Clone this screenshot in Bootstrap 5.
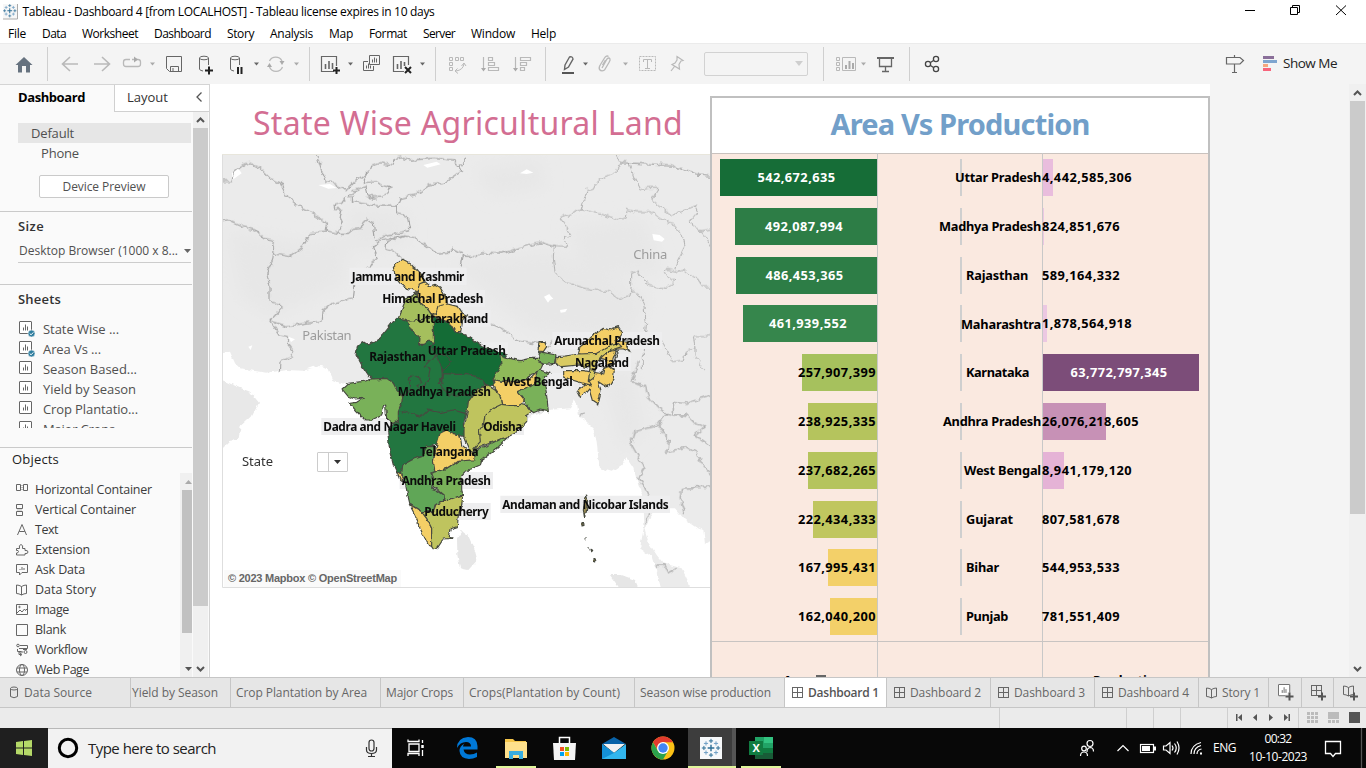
<!DOCTYPE html>
<html lang="en">
<head>
<meta charset="utf-8">
<title>Tableau - Dashboard 4</title>
<link href="https://cdn.jsdelivr.net/npm/bootstrap@5.3.0/dist/css/bootstrap.min.css" rel="stylesheet">
<style>
body{width:1366px;height:768px;overflow:hidden;font:12px/20px "Open Sans","Noto Sans",sans-serif;color:#505050;background:#fff}
svg{display:block;flex:none}
.fit{white-space:nowrap;display:inline-block}
.win{color:#000;font-family:"Open Sans",sans-serif}
.titlebar{height:24px}.menubar{height:19px}
.toolbar{height:41px;background:#f4f4f4;border-top:1px solid #ebebeb}
.toolbar svg{margin-top:-1px}
.lt{stroke:#b9b9b9;fill:none}.dk{stroke:#666;fill:none}
.cl{fill:#aaa;stroke:none}.cd{fill:#666;stroke:none}.sep{stroke:#cfcfcf;fill:none}
.combo{width:104px;height:24px;border:1px solid #d2d2d2;border-radius:2px;margin-top:8px}
.workspace{height:593px}
.side{width:210px;background:#fafafa;border-right:1px solid #d4d4d4;border-top:1px solid #d4d4d4}
.sidehead{height:27px}
.tab-off{background:#fff;width:95px;border-left:1px solid #d0d0d0;border-bottom:1px solid #d0d0d0;padding-left:12px;color:#333;font-size:13px;line-height:25px}
.pane{width:192px}
.h{font-weight:600;font-size:13px;color:#333}
.rule{border-top:1px solid #cacaca}
.sel{background:#e6e6e6;height:20px;margin:11px 0 0 18px;padding-left:13px;width:173px}
.device{width:130px;height:23px;border:1px solid #cacaca;border-radius:2px;margin:11px 0 0 39px;line-height:20px;padding:0;font-size:12px;background:#fff;color:#505050}
.size-box{margin:5px 1px 0 18px;height:22px;border-bottom:1px solid #ccc}
.rowi{height:20px;font-size:13px;gap:8px;padding-left:19px}
.rowo{height:20px;font-size:12.5px;gap:6px;padding-left:16px;color:#3c3c3c}
.canvas-bg{background:#f4f4f4}
.board{width:1000px;background:#fff}
.viz{font-family:"Noto Sans",sans-serif}
.map-title{color:#d36e92;font-size:32px;line-height:40px;height:70px;padding:19px 0 0 43px}
.filter{left:32px;top:367px;font-size:13px;color:#333}
.dd{width:31px;height:20px;border:1px solid #ccc;background:#fff;margin-left:44px;margin-top:1px;border-radius:1px}
.credit{left:14px;top:486px;height:17px;line-height:17px;background:#fafafa;color:#666;font-family:"Liberation Sans",sans-serif;font-size:11px;font-weight:700;padding:0 4px}
.panel{width:500px;margin-top:12px;border:2px solid #c0c0c0;border-bottom:0;background:#fae9e0;color:#000;font-weight:700;font-size:12.8px}
.panel-title{height:56px;background:#fff;color:#729fc9;font-size:29px;font-weight:700;line-height:51px;border-bottom:1px solid #c9c2be;text-align:center}
.bars{height:488.900px;margin-top:-.900px;border-bottom:1px solid #c8c4c2}
.rowb{height:48.8px}
.c1{width:166px;border-right:1px solid #c8c8c8}.c2{width:165px;border-right:1px solid #c8c8c8}.c3{width:165px}
.bar-v{height:37px}
.tick{width:2px;height:37px;background:#cfcfcf;margin-left:82px}
.over{position:absolute;top:0;line-height:37.500px;white-space:nowrap}
.axis-a{padding:28px 0 0 22px}.axis-p{padding:28px 0 0 50px}
.tabs{height:31px;background:#e6e6e6;border-top:1px solid #c6c6c6;border-bottom:1px solid #c6c6c6;color:#666;font-size:12px}
.tabs>div{border-right:1px solid #c6c6c6;height:29px;line-height:29px;flex:none;display:flex;align-items:center;padding-left:6px}
.tabs>.on{background:#fff;font-weight:600;color:#555;line-height:26px}
.status{height:20px;background:#ebebeb}
.task{height:40px;background:#080808;color:#fff}
.search{width:344px;background:#f2f2f2;border-top:1px solid #b8b8b8;color:#222;font-size:15px;line-height:39px}
.clock{width:62px;text-align:center;font-size:12px;line-height:18px;padding-top:2px;margin-left:11px}
</style>
</head>
<body class="d-flex flex-column">
<svg width="0" height="0" class="position-absolute">
<defs>
<symbol id="sheet" viewBox="0 0 16 16"><rect x=".5" y=".5" width="12" height="12" rx=".5" fill="#fff" stroke="#666"/><path d="M4.500 9.500v-3M6.500 9.500v-6M8.500 9.500v-4" stroke="#666"/></symbol>
<symbol id="chk" viewBox="0 0 16 16"><use href="#sheet"/><circle cx="12.500" cy="12.500" r="3.500" fill="#2e7d9e" stroke="#fafafa" stroke-width=".6"/><path d="M10.700 12.500l1.400 1.300 2.200-2.400" stroke="#fff" fill="none"/></symbol>
<symbol id="dash" viewBox="0 0 12 12"><rect x=".5" y=".5" width="10" height="10" fill="none" stroke="#666"/><path d="M5.500 0v11M0 5.500h11" stroke="#666"/></symbol>
<symbol id="book" viewBox="0 0 12 12"><path d="M5.500 2.500Q3 1 .5 1v8.500q2.500 0 5 1.500 2.500-1.500 5-1.500V1Q8 1 5.500 2.500V11" fill="none" stroke="#666"/></symbol>
<symbol id="tab" viewBox="-12 -12 24 24"><g stroke="#2c6e96" stroke-width="1.700"><path d="M0-4V4M-4 0H4"/><path d="M0-11v5M-2.500-8.500h5M0 6v5M-2.500 8.500h5M-11 0h5M-8.500-2.500v5M6 0h5M8.500-2.500v5" stroke-width="1.200"/><path d="M-6-8v5M-8.500-5.500h5M6-8v5M3.500-5.500h5M-6 3v5M-8.500 5.500h5M6 3v5M3.500 5.500h5" stroke="#6d9ec4" stroke-width="1.200"/></g></symbol>
</defs></svg>

<header class="titlebar win d-flex align-items-center flex-shrink-0">
<svg width="22.500" height="24" viewBox="0 0 22.500 24"><rect x="3" y="4" width="15" height="15" fill="#f7f7f7"/><path d="M17.500 4v15H3" stroke="#aaa" fill="none"/><use href="#tab" x="2.500" y="3.500" width="14.500" height="14.500"/></svg>
<span class="fit" data-w="412">Tableau - Dashboard 4 [from LOCALHOST] - Tableau license expires in 10 days</span>
<svg class="ms-auto" width="136" height="24" viewBox="1230 0 136 24" fill="none" stroke="#000"><path d="M1245 10.500h10M1290.500 7.500h7v7h-7zM1292.500 7.500v-2h7v7h-2M1336 5.500l10 9.500M1346 5.500l-10 9.500"/></svg>
</header>
<nav class="menubar win d-flex flex-shrink-0 ps-2" style="line-height:20px">
<span style="width:34px"><span class="fit" data-w="18">File</span></span><span style="width:40px"><span class="fit" data-w="24">Data</span></span><span style="width:72px"><span class="fit" data-w="56">Worksheet</span></span><span style="width:73px"><span class="fit" data-w="57">Dashboard</span></span><span style="width:43px"><span class="fit" data-w="27">Story</span></span><span style="width:59px"><span class="fit" data-w="43">Analysis</span></span><span style="width:40px"><span class="fit" data-w="24">Map</span></span><span style="width:54px"><span class="fit" data-w="38">Format</span></span><span style="width:48px"><span class="fit" data-w="32">Server</span></span><span style="width:60px"><span class="fit" data-w="44">Window</span></span><span class="fit" data-w="25">Help</span>
</nav>

<div class="toolbar d-flex flex-shrink-0">
<svg width="48" height="41" viewBox="0 43 48 41"><path d="M15.500 65L24 57l8.500 8h-2.500v7.500h-4V66h-4v6.500h-4V65z" fill="#66727f"/><path class="sep" d="M47.500 47v34"/></svg>
<svg width="68" height="41" viewBox="48 43 68 41"><path class="lt" stroke-width="1.600" d="M78 64H63M70 57l-7.500 7 7.500 7M94 64h15M102 57l7.500 7-7.500 7"/></svg>
<svg width="44" height="41" viewBox="116 43 44 41"><path class="lt" stroke-width="1.300" d="M130 59.500h-4q-2.500 0-2.500 2.500v2q0 2.500 2.500 2.500h12q2.500 0 2.500-2.500v-2q0-2.500-2.500-2.500h-6"/><path class="cl" d="M134 56.500v6l4-3zM150 62.500h5l-2.500 3z"/></svg>
<svg width="30" height="41" viewBox="160 43 30 41"><path class="dk" d="M166.500 56.500h15v15h-12l-3-3zM170.500 71v-4.500h8V71M173 68v3"/></svg>
<svg width="32" height="41" viewBox="190 43 32 41"><g class="dk"><ellipse cx="204" cy="58" rx="4.500" ry="1.800"/><path d="M199.500 58v11q0 1.500 3.500 2M208.500 58v7"/><path stroke="#222" stroke-width="2" d="M205 70.500h8M209 66.500v8"/></g></svg>
<svg width="42" height="41" viewBox="222 43 42 41"><g class="dk"><ellipse cx="235" cy="58" rx="4.500" ry="1.800"/><path d="M230.500 58v11q0 1.500 3.500 2M239.500 58v7"/><path stroke="#222" stroke-width="2" d="M238 67v7M241.500 67v7"/></g><path class="cd" d="M254 62.500h5l-2.500 3z"/></svg>
<svg width="46" height="41" viewBox="264 43 46 41"><path class="lt" stroke-width="1.300" d="M269.500 61a7 7 0 0 1 12.500 0M282.500 67a7 7 0 0 1-13 0"/><path class="cl" d="M279.500 61h5l-2.500 4zM267 67h5l-2.500-4zM294 62.500h5l-2.500 3z"/><path class="sep" d="M309.500 47v34"/></svg>
<svg width="48" height="41" viewBox="310 43 48 41"><path class="dk" stroke-width="1.200" d="M334 71.500h-12.500v-15h15V66"/><path class="dk" stroke-width="1.600" d="M325.500 69v-5M329 69v-8M332.500 69v-6"/><path stroke="#222" stroke-width="2" d="M333 70.500h7M336.500 67v7"/><path class="cd" d="M348 62.500h5l-2.500 3z"/></svg>
<svg width="28" height="41" viewBox="358 43 28 41"><path class="dk" d="M369.500 55.500h10v9h-10zM368 61.500h-4.500v9h10V66M372.500 62.500v-3M374.500 62.500v-5M376.500 62.500v-4M366.500 68.500v-3M368.500 68.500v-5M370.500 68.500v-3"/></svg>
<svg width="50" height="41" viewBox="386 43 50 41"><path class="dk" stroke-width="1.200" d="M404 71.500h-10.500v-15h15V65"/><path class="dk" stroke-width="1.600" d="M397.500 69v-5M401 69v-8M404.500 66v-4"/><path stroke="#222" stroke-width="2" d="M405 67l6 6M411 67l-6 6"/><path class="cd" d="M420 62.500h5l-2.500 3z"/><path class="sep" d="M435.500 47v34"/></svg>
<svg width="38" height="41" viewBox="436 43 38 41"><path class="lt" d="M449.500 57.500h3v3h-3zM455.500 57.500h3v3h-3zM460.500 57.500h3v3h-3zM449.500 62.500h3v3h-3zM449.500 67.500h3v3h-3zM464 64q-1 6-8 7M461.500 66l2.500-3 2 3M457.500 68.500L455 71l3 2.500"/></svg>
<svg width="72" height="41" viewBox="474 43 72 41"><path class="lt" stroke-width="1.200" d="M483.500 57v13M488.500 57.500h4v3h-4zM488.500 62.500h6v3h-6zM488.500 67.500h10v3h-10zM515.500 57v13M520.500 57.500h10v3h-10zM520.500 62.500h6v3h-6zM520.500 67.500h4v3h-4z"/><path class="cl" d="M481 68h5l-2.500 3.500zM513 68h5l-2.500 3.500z"/><path class="sep" d="M545.500 47v34"/></svg>
<svg width="44" height="41" viewBox="546 43 44 41"><path class="dk" stroke-width="1.400" d="M565 65l4.500-8q3-1 3.500 2l-4.500 8-4 2.500z"/><path d="M562 73h12" stroke="#555" stroke-width="2"/><path class="cd" d="M583 62.500h5l-2.500 3z"/></svg>
<svg width="42" height="41" viewBox="590 43 42 41"><path class="lt" stroke-width="1.300" d="M602 68l5-9q2-2 3 0 .5 1-1 3.500l-4.500 7.500q-3 2-5-.5-1-2 1-5l4-6.500q2-3 4-1.500M602.500 65l3-5"/><path class="cl" d="M623 62.500h5l-2.500 3z"/></svg>
<svg width="36" height="41" viewBox="632 43 36 41"><rect class="lt" x="639.500" y="56.500" width="16" height="14" stroke-dasharray="2 1"/><path class="lt" d="M643.500 62v-2.500h8V62M647.500 60v8M645 68.500h5"/></svg>
<svg width="36" height="41" viewBox="668 43 36 41"><path class="lt" stroke-width="1.200" d="M677 56.500l6 4-2 .5-2 3.500.5 4.500-7.500-4.500 3-1.500 2-3zM674.500 66.500L671 71"/></svg>
<div class="combo"><svg width="102" height="22"><path d="M90 9h8l-4 5z" fill="#cecece"/></svg></div>
<svg width="102" height="41" viewBox="808 43 102 41"><path class="sep" d="M823.500 47v34M909.500 47v34"/><path class="lt" d="M836.500 57.500h3v3h-3zM836.500 62.500h3v3h-3zM836.500 67.500h3v3h-3zM842.500 57.500h13v13h-13z"/><path stroke="#aaa" stroke-width="2" d="M846 69v-4M849.500 69v-8M853 69v-6"/><path class="cl" d="M861 62.500h5l-2.500 3z"/><path class="dk" stroke-width="1.300" d="M879.500 59v7.500h12V59M885.500 66v5M882 71.500h7"/><path stroke="#666" stroke-width="2" d="M877 58h17"/></svg>
<svg width="40" height="41" viewBox="910 43 40 41"><g fill="none" stroke="#444" stroke-width="1.300"><circle cx="928" cy="64" r="2.600"/><circle cx="936" cy="59" r="2.600"/><circle cx="936" cy="69" r="2.600"/><path d="M930.500 62.500l3-2M930.500 65.500l3 2"/></g></svg>
<svg class="ms-auto" width="66" height="41" viewBox="1217 43 66 41"><path class="dk" stroke-width="1.200" d="M1226.500 57.500h13.500l3.500 3-3.500 3.500h-13.500zM1234.500 55v2M1234.500 64v8M1232 72.500h5"/><path fill="#8a6f99" d="M1263 56h11v3h-11z"/><path fill="#7fa5cf" d="M1263 60h14v3h-14z"/><path fill="#f5a77f" d="M1263 64h5v3h-5z"/><path fill="#f8657c" d="M1263 68h8v3h-8z"/></svg>
<span class="fit" data-w="54" style="font-size:13.500px;line-height:39px;color:#222;margin-right:29px">Show Me</span>
</div>

<main class="workspace d-flex flex-shrink-0">
<aside class="side d-flex flex-column flex-shrink-0 overflow-hidden">
 <div class="sidehead d-flex justify-content-between flex-shrink-0"><span class="fit" data-w="67" style="font-size:13px;font-weight:700;color:#000;margin-left:18px;line-height:25px">Dashboard</span>
 <div class="tab-off d-flex"><span class="fit" data-w="41">Layout</span><svg class="ms-auto" width="16" height="26"><path d="M8.500 7.500L4 12l4.500 4.500" fill="none" stroke="#555" stroke-width="1.300"/></svg></div></div>
 <div class="d-flex" style="height:565px">
 <div class="pane overflow-hidden">
  <div class="sel d-block"><span class="fit" data-w="43" style="font-size:13px">Default</span></div>
  <div style="padding-left:41px"><span class="fit" data-w="38" style="font-size:13px">Phone</span></div>
  <button class="device btn d-block"><span class="fit" data-w="83">Device Preview</span></button>
  <div class="rule" style="margin-top:13px"></div>
  <div class="h" style="padding:4px 0 0 18px"><span class="fit" data-w="26">Size</span></div>
  <div class="size-box d-flex"><span class="fit" data-w="159" style="margin-left:1px;margin-right:5px">Desktop Browser (1000 x 8...</span><svg width="9" height="20"><path d="M1 8h7l-3.500 4z" fill="#666"/></svg></div>
  <div class="rule" style="margin-top:21px"></div>
  <div class="h" style="padding:4px 0 0 18px"><span class="fit" data-w="43">Sheets</span></div>
  <div class="overflow-hidden" style="height:119px;padding-top:10px">
   <div class="rowi d-flex"><svg width="16" height="18"><use href="#chk" y="2" width="16" height="16"/></svg><span class="fit" data-w="76">State Wise ...</span></div>
   <div class="rowi d-flex"><svg width="16" height="18"><use href="#chk" y="2" width="16" height="16"/></svg><span class="fit" data-w="58">Area Vs ...</span></div>
   <div class="rowi d-flex"><svg width="16" height="18"><use href="#sheet" y="2" width="16" height="16"/></svg><span class="fit" data-w="94">Season Based...</span></div>
   <div class="rowi d-flex"><svg width="16" height="18"><use href="#sheet" y="2" width="16" height="16"/></svg><span class="fit" data-w="93">Yield by Season</span></div>
   <div class="rowi d-flex"><svg width="16" height="18"><use href="#sheet" y="2" width="16" height="16"/></svg><span class="fit" data-w="95">Crop Plantatio...</span></div>
   <div class="rowi d-flex"><svg width="16" height="18"><use href="#sheet" y="2" width="16" height="16"/></svg><span class="fit" data-w="72">Major Crops</span></div>
  </div>
  <div class="rule" style="margin-top:19px"></div>
  <div class="d-flex justify-content-between" style="height:230px">
   <div><div style="font-size:13px;color:#222;padding:1px 0 0 12px"><span class="fit" data-w="47">Objects</span></div>
   <div style="padding-top:11px">
    <div class="rowo d-flex"><svg width="13" height="18" fill="none" stroke="#666"><path d="M.5 4.500h4v6h-4zM7.500 4.500h4v6h-4z"/><path stroke="#bbb" d="M5 5.500h2M5 7.500h2M5 9.500h2"/></svg><span class="fit" data-w="117">Horizontal Container</span></div>
    <div class="rowo d-flex"><svg width="13" height="18" fill="none" stroke="#666"><path d="M.5 4.500h6v4h-6zM.5 11.500h6v4h-6z"/><path stroke="#bbb" d="M1 10h5"/></svg><span class="fit" data-w="101">Vertical Container</span></div>
    <div class="rowo d-flex"><svg width="13" height="18" fill="none" stroke="#666"><path d="M1.500 15L6 4.500 10.500 15M3.200 11.500h5.600"/></svg><span class="fit" data-w="23">Text</span></div>
    <div class="rowo d-flex"><svg width="13" height="18" fill="none" stroke="#666"><path d="M.5 8.500h3q-1-3.500 1.500-4 2.500.5 1.500 4h2.500v2q3-.5 3 1.500t-3 1.500v1.500H.5v-2q2 0 2-1.500t-2-1z"/></svg><span class="fit" data-w="55">Extension</span></div>
    <div class="rowo d-flex"><svg width="13" height="18" fill="none" stroke="#666"><path d="M.5 4.500h11v8H6l-2.500 2.500v-2.500h-3zM4 10V9M6 10V7M8 10V8"/></svg><span class="fit" data-w="50">Ask Data</span></div>
    <div class="rowo d-flex"><svg width="13" height="18"><use href="#book" y="4" width="12" height="12"/></svg><span class="fit" data-w="61">Data Story</span></div>
    <div class="rowo d-flex"><svg width="13" height="18" fill="none" stroke="#666"><path d="M.5 4.500h11v10H.5zM1 13l3-3 2 2 2.500-3 1 1.500 2-2"/><circle cx="3.500" cy="7" r=".7"/></svg><span class="fit" data-w="34">Image</span></div>
    <div class="rowo d-flex"><svg width="13" height="18" fill="none" stroke="#666"><path d="M.5 4.500h11v11H.5z"/></svg><span class="fit" data-w="31">Blank</span></div>
    <div class="rowo d-flex"><svg width="13" height="18" fill="none" stroke="#666"><circle cx="2" cy="5.500" r="1.300"/><path d="M4 5.500h7.500v3H3M1.500 9v2.500h4M7 9.500h4"/><circle cx="9.500" cy="12" r="1.500"/><path d="M7 12H3v2.500h2M4 13l2 1.500-2 1.500"/></svg><span class="fit" data-w="52">Workflow</span></div>
    <div class="rowo d-flex"><svg width="13" height="18" fill="none" stroke="#666"><circle cx="6" cy="10" r="5.500"/><ellipse cx="6" cy="10" rx="2.500" ry="5.500"/><path d="M1 8h10M1 12h10"/></svg><span class="fit" data-w="54">Web Page</span></div>
   </div></div>
   <svg width="12" height="204" style="margin-top:25px"><path fill="#f0f0f0" d="M0 0h12v204H0z"/><path fill="#c1c1c1" d="M2 17h10v143H2z"/><path fill="#aaa" d="M5 11h7l-3.500-4z"/><path fill="#555" d="M5 194h7l-3.500 4z"/></svg>
  </div>
 </div>
 <svg width="17" height="565" viewBox="192 112 17 565"><path fill="#f0f0f0" d="M193 112h15v565h-15z"/><path fill="#cbcbcb" d="M193 128h15v478h-15z"/><path fill="none" stroke="#555" stroke-width="2" d="M197 122l3.500-3.500 3.500 3.500M197 667l3.500 3.500 3.500-3.500"/></svg>
 </div>
</aside>

<section class="canvas-bg viz flex-grow-1 overflow-hidden">
<div class="board d-flex position-relative h-100">
 <div style="width:500px">
  <div class="map-title"><span class="fit" data-w="430">State Wise Agricultural Land</span></div>
  <svg width="489" height="434" viewBox="6 12 1467 1302" style="margin-left:12px">
  <defs><filter id="rough" x="-40" y="-40" width="1560" height="1400" filterUnits="userSpaceOnUse" color-interpolation-filters="sRGB"><feTurbulence type="fractalNoise" baseFrequency=".05" numOctaves="2" seed="4"/><feDisplacementMap in="SourceGraphic" scale="20" xChannelSelector="R" yChannelSelector="G"/></filter>
  <filter id="fine" x="-40" y="-40" width="1560" height="1400" filterUnits="userSpaceOnUse" color-interpolation-filters="sRGB"><feTurbulence type="fractalNoise" baseFrequency=".06" numOctaves="2" seed="9"/><feDisplacementMap in="SourceGraphic" scale="12" xChannelSelector="R" yChannelSelector="G"/></filter>
  <filter id="soft" x="-20%" y="-20%" width="140%" height="140%"><feGaussianBlur stdDeviation="24"/></filter></defs>
  <rect y="-20" width="1500" height="1360" fill="#ebebeb"/>
  <!-- relief shading -->
  <g filter="url(#soft)" fill="#e7e7e7"><path d="M20 240l250 40 120-30-20 150-220 100-90-60z"/><path d="M690 340l300-40 300 140-60 130-300-30z"/><path d="M380 170l180 20 10 80-170 40z"/><path d="M760 60l200-30 20 80-160 30z"/><path d="M1040 230l230-30 60 170-230 10z"/><path d="M1150 700l80-60 40 200-60 60z"/></g>
  <!-- sea -->
  <g filter="url(#fine)">
  <path fill="#fff" d="M-30 610H6L30 605 45 640 60 655 100 662 140 668 200 660 250 662 300 648 325 655 340 690 380 705 455 690 540 830 600 1010 640 1170 720 1080 728 1000 745 965 860 870 930 800 985 780 1050 775 1062 750 1072 765 1078 800 1100 815 1120 835 1130 875 1135 925 1140 955 1175 965 1205 945 1220 925 1240 955 1255 1005 1270 1045 1273 1125 1260 1195 1295 1220 1315 1285 1330 1340H-30z"/>
  <path fill="#fff" d="M1290 1100L1300 1085 1330 1075 1365 1075 1395 1110 1425 1130 1450 1140 1455 1185 1500 1150V1340H1415L1400 1285 1385 1255 1330 1240 1310 1215 1285 1175 1275 1140z"/>
  <path fill="#e8e8e8" d="M-20 685L6 690 40 705 90 725 117 758 95 800 62 830 55 870 30 872 6 897-20 900z"/>
  <path fill="#e6e6e6" d="M711 1165l14-22 20 15 20 45 7 27-27 30-25-5-8-40zM1170 1275h35l40 15 22 50h-50z"/>
  </g>
  <g fill="#fff"><path d="M35 70l20-15 10 15-25 18zM610 45l40-10 12 8-40 10zM295 105l35-3 20 12-25 2zM900 70l20-12 20 10-20 4zM1297 252l22 3 15 12-8 8-25-4zM972 440l16-8 4 6 8 8-10 4-6 8zM1020 480l22-4-6 10-14 2zM85 590l12-4-5 14zM205 560l20 8-12 8zM260 655l20-8 15 10z"/></g>
  <!-- country and province borders -->
  <g filter="url(#rough)" fill="none" stroke="#a3a3a3" stroke-width="3.300">
   <path d="M-20 95L35 95 40 70 70 45 85 38 120 55 150 85 180 98 200 140 245 175 310 210 322 222 318 243 270 248 250 290 210 320 165 312 158 290 160 270 130 265 105 240 70 230 30 212-20 218M318 243L355 250 385 250 400 238 425 235 440 205 460 220 465 265M160 312L158 330 140 370 150 410 150 455 178 462 180 480 150 512 200 528 310 512 312 480 335 462 380 450 400 445 405 400 450 350 455 340 475 325 460 290 480 272 530 262 555 258M150 512L178 555 205 560 205 585 220 605 215 620 180 635 178 665"/>
   <path d="M285 0L305 60 318 95 345 98 378 122 405 95 450 60 455 45 480 38 520 45 525 25 545 20 575 30 640 25 700 30 720 50 725 60 670 100 625 105 585 135 540 145 530 168 475 168 430 160 400 155 400 140 385 140 400 122 435 110 440 130 470 150M450 60L430 85 430 98 470 95 490 110 510 115 500 130 475 140 440 140M378 140L365 160 342 165 345 178 365 180 360 205 370 215 355 250M530 168L530 190 562 200 570 240 540 250 500 255 468 272M720 50L735 20M555 258L580 262 625 290 650 312 685 310 700 295 728 310 720 350M555 258L500 275 498 298 525 305 548 328M728 318L770 320 785 308 845 312 900 292 965 278 1005 290"/>
   <g transform="translate(735 0)" stroke="#b2b2b2" stroke-width="3"><path d="M450 0L468 38 455 65 420 80 395 95 385 118 365 122 348 180 285 203 300 225 315 255 300 265 308 292 268 290 265 320 270 370 300 395 360 415 430 425 462 448 495 435 500 400 500 370 520 362 530 385 550 405 600 415 630 395 600 370 605 358 640 365 660 360 680 378 700 385 710 410 760 412M348 180L400 190 455 210 480 205 487 178 510 185 560 185 590 210 630 225 655 265 660 290 640 330 632 360M492 38L505 80 525 120 550 115 580 115 560 150 600 180 625 195 690 168 698 185 678 210 685 230 705 242 760 235M705 242L725 265 740 300M500 420L520 430 535 465 545 520 540 560 535 600 535 660M590 575L625 635 655 630 660 610 690 590 685 560 760 560M690 590L690 620 720 660"/><path stroke="#999" d="M468 38L560 42 620 45 660 62 700 75 760 80M75 520L120 540 150 570 190 575 225 580M245 590L265 570"/></g>
   <g transform="translate(735 645)"><path d="M520-10L500 50 540 60 550 95 580 125 605 145 625 150 625 112 660 115 760 82M605 145L580 180 510 200 500 240 540 310 520 340 550 390 555 450 538 480M580 180L610 225 605 265 665 245 690 260 710 295 760 350M625 150L665 150 690 175 718 185 690 210 760 260M760 365L650 370 645 400 660 445M575 600L600 600 610 625 635 610M345 155L355 140"/></g>
  </g>
  <!-- label plates lie under the states -->
  <g fill="#eeeeef"><path d="M388 353h352v52H388zM481 420h314v50H481zM584 480h228v50H584zM616 577h248v50H616zM997 546h329v51H997zM1059 612h174v51h-174zM842 669h222v51H842zM304 804h410v51H304zM784 804h128v51H784zM539 966h280v51H539zM607 1059h205v51H607zM841 1037h509v52H841z"/></g>
  <!-- states -->
  <g filter="url(#fine)" stroke="#474a40" stroke-width="3.500" stroke-linejoin="round">
   <path fill="#227640" d="M408 612L412 592 430 575 445 585 480 565 500 540 520 515 535 505 558 507 575 540 600 565 598 580 620 575 640 560 780 640 800 670 815 690 795 705 765 750 750 765 738 785 730 825 742 862 720 856 690 851 668 842 650 882 620 892 605 920 575 931 549 947 545 971 530 967 520 945 510 905 503 845 518 820 535 815 535 785 545 762 548 740 530 718 520 700 500 686 455 687 445 675 425 645z"/>
   <path fill="#146c36" d="M634 502l21 3 15 5 20 10 15 25 17 5 13 5 15 8 45 30 35 10 32 12-15 25 13 22-5 18-25 10 5 20-35-2-10-15-25-15-30-5-20 0-45-2-2 30-8-5 10-25-10-30-10-20-15-30 5-10z"/>
   <path fill="#f4cf66" d="M520 352l10-10 18-14 20 10 12 12 15 12 10 13 7 20-14 7-6 23-17-7-15-3-20-15-12-15zM592 425l6-23 17-7 15 13 15-5 15 9 20 33 2 17-27 6-7 22-12 6-11-16-20-18-13-22zM636 496l12-6 7-22 27-6 33 8 13 20 12 5-12 15-6 35-17 0-15-25-20-10z"/>
   <path fill="#a5bf5d" d="M535 505l10-25 7-18 8-17 30-17 2 12 13 22 20 18 13 20 2 20 0 40 2 18-17-5-12 10-15 0 2-17-25-25-17-33z"/>
   <path fill="none" d="M553 510l25 4 25-5 27-5M545 742L575 718 565 685 580 675 600 685 605 700 590 708 600 718 625 690 630 655 612 650 640 620 660 612 685 620 690 635 678 655 668 665M665 650L668 690 655 700 685 735 750 735 770 748M545 785L580 792 605 800 625 780 660 788 700 780 735 790"/>
   <path fill="#79b159" d="M366 717l19-17 55-7 15-6 45-2 20 15 10 20 18 20-3 20-10 25 0 30-17 5-18-10-3-45-7 5-5 25-30 15-20 0-25-25-20-25 20-3 20-12-25 2-20-7z"/>
   <path fill="#bfc45e" d="M825 720l15 15 5 28 30-7 45 11 15 18-15 10 0 20-35 35-30 15-20 5-40 15-30 10-10 25-10-25-13-30 0-30 8-40 5-40 25-35 30-15z"/><path fill="none" d="M845 763l-25 12-25 20-5 30-12 15 3 35-23 25"/>
   <path fill="#8fba59" d="M840 615l30 10 30 7 30-7 28 0 10 20-10 20-30 10-15 25-40-4-55-6 25-45z"/>
   <path fill="#79b159" d="M958 605l50 10-5 25-30 3-18-8zM890 725l35-15 25-15 0-30 10-5 30 10-20 10 5 30 5 25 5 50-25-5-20 8-20-23z"/>
   <path fill="#f4cf66" d="M820 690l35 5 30 0 40-5 25-25-3 30-22 15-35 15 25 30-20 12-20 0-30-4-5-28-15-20zM960 575l15 0 5 15-10 15-13-2z"/>
   <path fill="#79b159" d="M630 965l15 0 35-10 30-20 40-5 15-30 40-15 40-20 20-2-40 37-40 30-5 15-45 20-10 10 0 40 3 20-28 10-30 10 2-20-22-20-15-5 5-20z"/>
   <path fill="#60a657" d="M548 945l27-15 30-10 15-30 25 0-5 45 5 30-15 5 10 20-5 25 15 5 22 15-2 20-25 10-5 20-35 0-35-22-8-33-7-35-10-25z"/>
   <path fill="#f4cf66" d="M640 935l10-50 10-35 20-10 20 10 20 5 5 30 25 20 15 10 0 15-15 0-40 5-30 20-35 10zM530 967l15 3 3 25-8-5zM568 1063l37 22 15 20 15 30 2 55-12-5-25-50-15-40z"/>
   <path fill="#bfc45e" d="M605 1085l35 0 8-22 22-8 58-20-3 30-10 30-3 35-22 7-5 23 13 5-28 2-15 23-13 10-7-10 0-55-15-30z"/>
   <path fill="#f4cf66" d="M1075 610l5-20 15-10 20-20 20-15 15-10 15 5 30-10 10 15-5 15-15 15 20-2 20 0-5 17 10 15-20-8-20 0-15 43-25 10 20 0 13 10-3 25-15 25-15-5-15-10 8 30-10 40-15-10-10-35 0-5-10 12-17 15-10-20 25-20-65-20 0-20 60 0 60 10 10-40-60-10z"/>
   <path fill="#d8ca62" d="M1007 620l28-2 40-6 55-2 35-20 30-10 10 10-30 10-30 20-15 20-10 45-15 10 5-40-35-10-50 5-18-10z"/>
   <path fill="none" d="M1110 660l15 0 10-25 30-30 30-5-15 40-25 15-15 20M1090 700l25 5-10-15"/>
   <path fill="#9a8b52" d="M1100 1035l3 15-4 35-6 15-3-20 3-20zM1086 1118h5l1 8-6 2zM1094 1165l2 3M1106 1192l3 3M1113 1198l5 3-3 4zM1122 1224l5 4 0 8-5-2z"/>
  </g>
  <g font-family="Noto Sans, sans-serif" font-size="39" fill="#9c9c9c"><text x="247" y="571" textLength="148">Pakistan</text><text x="1240" y="327" textLength="102">China</text></g>
  <g font-family="Noto Sans, sans-serif" font-size="35.500" font-weight="700" fill="#0c0c0c">
   <text x="395" y="393" textLength="338">Jammu and Kashmir</text><text x="487" y="459" textLength="303">Himachal Pradesh</text><text x="590" y="519" textLength="215">Uttarakhand</text><text x="448" y="633" textLength="170">Rajasthan</text><text x="623" y="615" textLength="235">Uttar Pradesh</text><text x="1003" y="585" textLength="317">Arunachal Pradesh</text><text x="1065" y="651" textLength="162">Nagaland</text><text x="533" y="738" textLength="280">Madhya Pradesh</text><text x="848" y="708" textLength="210">West Bengal</text><text x="310" y="843" textLength="398">Dadra and Nagar Haveli</text><text x="790" y="843" textLength="117">Odisha</text><text x="600" y="918" textLength="176">Telangana</text><text x="545" y="1005" textLength="268">Andhra Pradesh</text><text x="613" y="1098" textLength="193">Puducherry</text><text x="847" y="1077" textLength="499">Andaman and Nicobar Islands</text>
  </g>
  <path d="M7.500 12v1300.500h1466" stroke="#dedede" stroke-width="3" fill="none"/><path d="M6 13.500h1467" stroke="#e8e6dc" stroke-width="3"/>
  </svg>
  <div class="filter position-absolute d-flex"><span class="fit" data-w="31">State</span><div class="dd"><svg width="29" height="18"><path d="M10.500 0v18" stroke="#ccc"/><path d="M16 7h7l-3.500 4z" fill="#333"/></svg></div></div>
  <div class="credit position-absolute"><span class="fit" data-w="169">© 2023 Mapbox © OpenStreetMap</span></div>
 </div>
 <div class="panel">
  <div class="panel-title"><span class="fit" data-w="259">Area Vs Production</span></div>
  <div class="bars" id="bars"></div>
  <div class="d-flex" style="height:80px"><div class="c1 axis-a d-flex justify-content-center"><span class="fit">Area</span><svg width="12" height="8" style="margin:5px 0 0 3px"><path fill="#666" d="M0 0h10v3H0z"/></svg></div><div class="c2"></div><div class="c3 axis-p">Production</div></div>
 </div>
</div>
</section>
<svg width="17" height="593" viewBox="1349 84 17 593"><path fill="#f0f0f0" d="M1349 84h17v593h-17z"/><path fill="#cbcbcb" d="M1350 101h15v413h-15z"/><path fill="none" stroke="#555" stroke-width="2" d="M1354 95l3.500-3.500 3.500 3.500M1354 667l3.500 3.500 3.500-3.500"/></svg>
</main>

<div class="tabs d-flex flex-shrink-0">
<div style="width:131px;padding-left:9px"><svg width="15" height="16" fill="none" stroke="#666"><ellipse cx="5" cy="3.500" rx="3.500" ry="1.500"/><path d="M1.500 3.500v8q3.500 2.500 7 0v-8"/></svg><span class="fit" data-w="68">Data Source</span></div>
<div style="width:100px;padding-left:1px"><span class="fit" data-w="86">Yield by Season</span></div>
<div style="width:150px;padding-left:5px"><span class="fit" data-w="131">Crop Plantation by Area</span></div>
<div style="width:83px;padding-left:5px"><span class="fit" data-w="67">Major Crops</span></div>
<div style="width:171px;padding-left:5px"><span class="fit" data-w="151">Crops(Plantation by Count)</span></div>
<div style="width:150px;padding-left:5px"><span class="fit" data-w="131">Season wise production</span></div>
<div class="on" style="width:102px;padding-left:7px"><svg width="16" height="12"><use href="#dash" width="12" height="12"/></svg><span class="fit" data-w="71">Dashboard 1</span></div>
<div style="width:104px;padding-left:7px"><svg width="16" height="12"><use href="#dash" width="12" height="12"/></svg><span class="fit" data-w="71">Dashboard 2</span></div>
<div style="width:104px;padding-left:7px"><svg width="16" height="12"><use href="#dash" width="12" height="12"/></svg><span class="fit" data-w="71">Dashboard 3</span></div>
<div style="width:104px;padding-left:7px"><svg width="16" height="12"><use href="#dash" width="12" height="12"/></svg><span class="fit" data-w="71">Dashboard 4</span></div>
<div style="width:70px;padding-left:7px"><svg width="16" height="12"><use href="#book" width="12" height="12"/></svg><span class="fit" data-w="38">Story 1</span></div>
<div style="width:33px;padding-left:9px"><svg width="18" height="18"><use href="#sheet" width="15" height="15"/><path d="M7.500 12.500h8M11.500 8.500v8" stroke="#e6e6e6" stroke-width="4"/><path d="M7.500 12.500h8M11.500 8.500v8" stroke="#555" stroke-width="2"/></svg></div>
<div style="width:32px;padding-left:9px"><svg width="18" height="18"><use href="#dash" y="1" width="12" height="12"/><path d="M7 12.500h8M11 8.500v8" stroke="#555" stroke-width="2"/></svg></div>
<div class="border-0" style="width:32px;padding-left:9px"><svg width="18" height="18"><use href="#book" y="1" width="12" height="12"/><path d="M7 12.500h8M11 8.500v8" stroke="#555" stroke-width="2"/></svg></div>
</div>
<div class="status flex-shrink-0"><svg class="ms-auto" width="380" height="20" viewBox="986 708 380 20"><path stroke="#cfcfcf" d="M999.500 708v20M1126.500 708v20M1153.500 708v20M1180.500 708v20M1227.500 708v20M1298.500 708v20"/><path fill="#555" d="M1236 714h1.500v7h-1.500zM1242 714v7l-4-3.500zM1257 714v7l-4-3.500zM1269 714v7l4-3.500zM1284 714v7l4-3.500zM1288.500 714h1.500v7h-1.500zM1349 712h11v11h-11z"/><path fill="#bbb" d="M1328 712h11v7h-11zM1328 720h3v3h-3zM1332 720h3v3h-3zM1336 720h3v3h-3zM1307 712h3v3h-3zM1311 712h3v3h-3zM1315 712h3v3h-3zM1307 716h3v3h-3zM1311 716h3v3h-3zM1315 716h3v3h-3zM1307 720h3v3h-3zM1311 720h3v3h-3zM1315 720h3v3h-3z"/></svg></div>

<footer class="task win d-flex flex-shrink-0">
<svg width="48" height="40" viewBox="0 728 48 40"><path fill="#1f1f1f" d="M0 728h48v40H0z"/><path fill="#b5d968" d="M16 742l7-1v6.500h-7zM24 741l8-1v7.500h-8zM16 748.500h7v6.500l-7-1zM24 748.500h8v7.500l-8-1z"/></svg>
<div class="search d-flex"><svg width="40" height="39"><circle cx="20" cy="19" r="8.700" fill="none" stroke="#000" stroke-width="3"/></svg><span class="fit" data-w="128">Type here to search</span><svg class="ms-auto" width="40" height="39" fill="none" stroke="#333" stroke-width="1.200"><rect x="17" y="11" width="5" height="11" rx="2.500"/><path d="M14.500 18v3q0 3.500 5 3.500t5-3.500v-3M19.500 24.500V27M16 27.500h7"/></svg></div>
<svg width="48" height="40" viewBox="392 728 48 40" fill="none" stroke="#fff" stroke-width="1.300"><path d="M409 744h10v7.500h-10zM408 739.500v2h11v-2M408 756v-2.500h11v2.500M422.500 740v3M422.500 750v6"/><path stroke-width="2.500" d="M422.500 745v3"/></svg>
<svg width="48" height="40" viewBox="440 728 48 40"><path fill="#0078d7" d="M457 748q0-10 11-11 9 0 9.500 9v3.500h-14q1 5 6.500 5 4 0 7-2v4.500q-4 2-8 2-9-.5-9.500-8 0-5 5-7.500-1.500 1.500-1.500 3h8q0-4.500-5-4.500-6 0-9 6z"/></svg>
<svg width="49" height="40" viewBox="488 728 49 40"><path fill="#f6c64a" d="M505 739h8l2 2h11v4h-21z"/><path fill="#fee08c" d="M505 742h22v16h-22z"/><path fill="#39aee0" d="M509 759v-8h14v8h-4v-4h-6v4z"/><path fill="#dff59a" d="M496 766h40v2h-40z"/></svg>
<svg width="48" height="40" viewBox="537 728 48 40"><path fill="none" stroke="#fff" stroke-width="1.500" d="M559.500 744v-6.500h10v6.500"/><path fill="#f4f4f4" d="M553 743h23l-1 17h-21z"/><path fill="#f25022" d="M560 747h4v4h-4z"/><path fill="#7fba00" d="M565 747h4v4h-4z"/><path fill="#00a4ef" d="M560 752h4v4h-4z"/><path fill="#ffb900" d="M565 752h4v4h-4z"/></svg>
<svg width="48" height="40" viewBox="585 728 48 40"><path fill="#0a63a8" d="M602 744l12-7 12 7z"/><path fill="#f3f3f3" d="M603 744h22l-11 9z"/><path fill="#32b6ee" d="M602 744l12 9 12-9v15h-24z"/><path fill="#1590d6" d="M602 744l12 9-12 6z"/></svg>
<svg width="55" height="40" viewBox="633 728 55 40"><circle cx="663" cy="748" r="11.500" fill="#fbc116"/><path fill="#e23b2e" d="M653 742.300a11.500 11.500 0 0 1 20 0H663l-5 8z"/><path fill="#2ba24c" d="M653 742.300A11.500 11.500 0 0 0 663 759.500l5-8.500-10 0z"/><circle cx="663" cy="748" r="6" fill="#fff"/><circle cx="663" cy="748" r="4.700" fill="#4285f4"/></svg>
<svg width="48" height="40" viewBox="688 728 48 40"><path fill="#3d3d3d" d="M688 728h44v40h-44z"/><path fill="#555" d="M732 728h4v40h-4z"/><path fill="#f6f8fa" d="M700 737h22v22h-22z"/><use href="#tab" x="701" y="738" width="20" height="20"/><path fill="#dff59a" d="M688 766h48v2h-48z"/></svg>
<svg width="48" height="40" viewBox="736 728 48 40"><path fill="#21a366" d="M755 737h9v11h-9z"/><path fill="#33c481" d="M764 737h9v6h-9z"/><path fill="#21a366" d="M764 743h9v5h-9z"/><path fill="#107c41" d="M755 748h18v5h-18z"/><path fill="#185c37" d="M755 753h18v6h-18z"/><path fill="#107c41" d="M749 741h14v14h-14z"/><text x="752.500" y="752" font-size="11" font-weight="700" fill="#fff">X</text><path fill="#dff59a" d="M741 766h40v2h-40z"/></svg>
<svg class="ms-auto" width="148" height="40" viewBox="1065 728 148 40" fill="none" stroke="#fff" stroke-width="1.200"><circle cx="1090" cy="743.500" r="3"/><path d="M1087 752q0-4 3-4.500 3.500 0 3.500 4"/><circle cx="1084" cy="748.500" r="2.300"/><path d="M1080.500 756q0-4 3.500-4 3.500 0 3.500 4M1117.500 751l5.500-5.500 5.500 5.500"/><rect x="1140.500" y="744.500" width="13" height="8"/><path fill="#fff" stroke="none" d="M1142 746h8v5h-8zM1154 746.500h2v4h-2z"/><path d="M1163.500 746h2.500l4-3.500v11l-4-3.500h-2.500zM1172 745.500q2 2.500 0 5M1174.500 743.500q3.500 4.500 0 9M1177 741.500q4 6.500 0 13"/><path d="M1191 754q0-9 10-11.500M1194 754q0-6.500 7-8.500M1197 754q0-4 4.500-5"/><path d="M1200 753.500h2" stroke-width="2"/></svg>
<span class="fit" data-w="23" style="font-size:12px;line-height:40px">ENG</span>
<div class="clock"><span class="fit" data-w="27">00:32</span><br><span class="fit" data-w="58">10-10-2023</span></div>
<svg width="57" height="40" viewBox="1309 728 57 40" fill="none" stroke="#fff" stroke-width="1.300"><path d="M1325.500 741.500h15v12h-5l-2.500 3-2.500-3h-5z"/><path stroke="#555" d="M1361.500 728v40"/></svg>
</footer>

<script src="https://cdn.jsdelivr.net/npm/bootstrap@5.3.0/dist/js/bootstrap.bundle.min.js"></script>
<script>
// state, area, area bar width, colour, production, production bar width, colour
const rows = [
 ['Uttar Pradesh','542,672,635',157,'#166d37','4,442,585,306',10,'#e9bddd'],
 ['Madhya Pradesh','492,087,994',142,'#2d7d46','824,851,676',1,'#ecc8e2'],
 ['Rajasthan','486,453,365',141,'#2d7d46','589,164,332',0,'#ecc8e2'],
 ['Maharashtra','461,939,552',134,'#36864c','1,878,564,918',4,'#ecc8e2'],
 ['Karnataka','257,907,399',75,'#a6c15d','63,772,797,345',156,'#7c4d79'],
 ['Andhra Pradesh','238,925,335',69,'#b5c45d','26,076,218,605',63,'#c791b6'],
 ['West Bengal','237,682,265',69,'#b5c45d','8,941,179,120',21,'#e5b3d6'],
 ['Gujarat','222,434,333',64,'#c0c65f','807,581,678',0,'#ecc8e2'],
 ['Bihar','167,995,431',49,'#f3d069','544,953,533',0,'#ecc8e2'],
 ['Punjab','162,040,200',47,'#f3d069','781,551,409',0,'#ecc8e2']];
const nameW = {'Uttar Pradesh':86,'Madhya Pradesh':102,'Rajasthan':62,'Maharashtra':80,'Karnataka':63,'Andhra Pradesh':98,'West Bengal':77,'Gujarat':47,'Bihar':33,'Punjab':42};
const numW = t => ({11:78,13:90,14:97})[t.length];
document.getElementById('bars').innerHTML = rows.map(([s,a,aw,ac,p,pw,pc]) => `
 <div class="rowb d-flex">
  <div class="c1 d-flex align-items-center justify-content-end"><div class="bar-v position-relative" style="width:${aw}px;background:${ac}"><span class="over ${aw>100?'text-white w-100 text-center pe-1':'end-0'}" style="${aw>100?'':'padding-right:1px'}"><span class="fit" data-w="${numW(a)}">${a}</span></span></div></div>
  <div class="c2 d-flex align-items-center position-relative"><div class="tick"></div><span class="over" style="top:6px;${nameW[s]>74?'right:1px':'left:88px'}"><span class="fit" data-w="${nameW[s]}">${s}</span></span></div>
  <div class="c3 d-flex align-items-center"><div class="bar-v position-relative" style="width:${pw}px;background:${pc}"><span class="over ${pw>100?'text-white w-100 text-center pe-1':'start-0'}" style="${pw>100?'':'margin-left:-1px'}"><span class="fit" data-w="${numW(p)}">${p}</span></span></div></div>
 </div>`).join('');
// tracks each label out to its set width
document.querySelectorAll('.fit[data-w]').forEach(e => {
 const n = e.textContent.length, w = e.getBoundingClientRect().width;
 e.style.letterSpacing = ((e.dataset.w - w) / n) + 'px';
});
</script>
</body>
</html>
